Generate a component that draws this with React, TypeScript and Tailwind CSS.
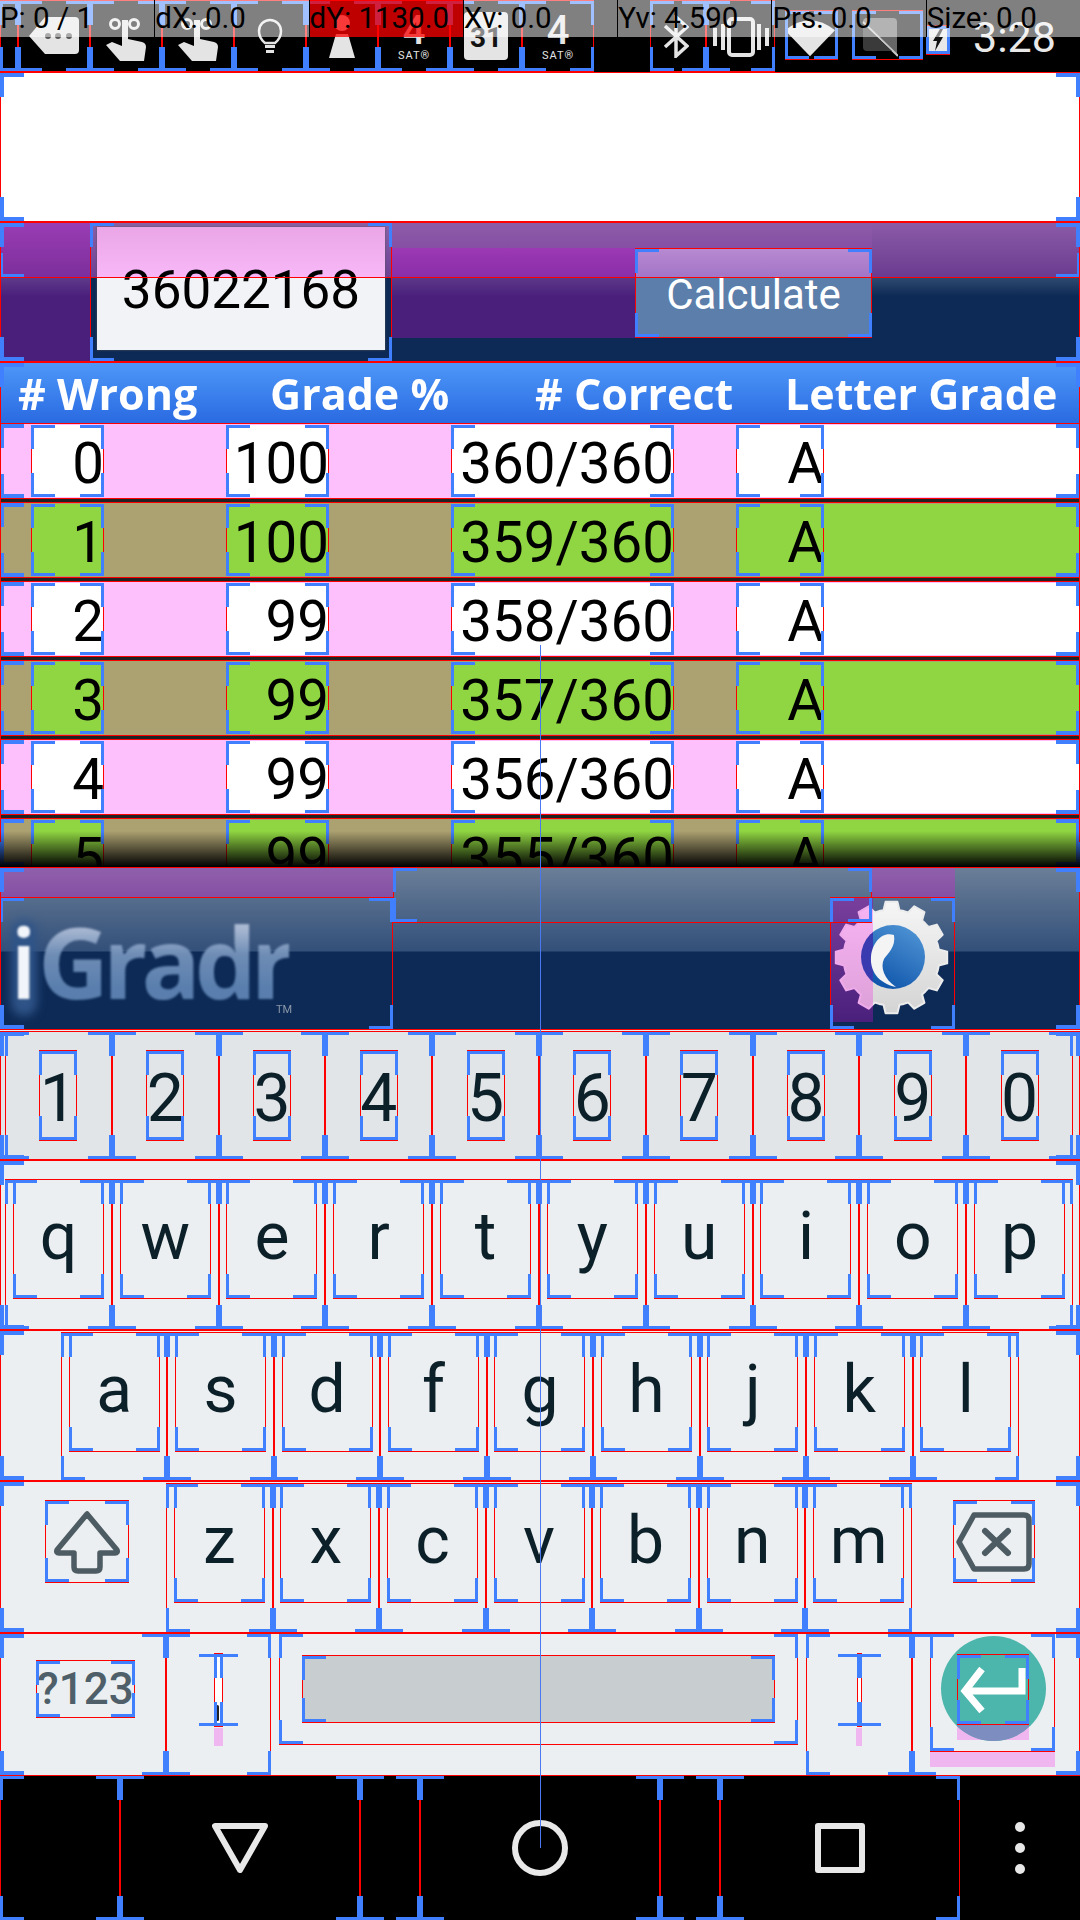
const rows = [
  ["0", "100", "360/360"],
  ["1", "100", "359/360"],
  ["2", "99", "358/360"],
  ["3", "99", "357/360"],
  ["4", "99", "356/360"],
  ["5", "99", "355/360"],
];
const debug = ["P: 0 / 1", "dX: 0.0", "dY: 1130.0", "Xv: 0.0", "Yv: 4.590", "Prs: 0.0", "Size: 0.0"];

// gear outline with short wide teeth
function gearPath(cx: number, cy: number, outer: number, inner: number, teeth: number) {
  const pts: string[] = [];
  for (let i = 0; i < teeth; i++) {
    const a = (i / teeth) * Math.PI * 2;
    const s = (Math.PI * 2) / teeth;
    [[inner, -0.5], [inner, -0.32], [outer, -0.2], [outer, 0.2], [inner, 0.32]].forEach(([r, o]) => {
      const t = a + o * s;
      pts.push(`${(cx + r * Math.cos(t)).toFixed(1)} ${(cy + r * Math.sin(t)).toFixed(1)}`);
    });
  }
  return "M" + pts.join("L") + "Z";
}

// layout bounds overlay: thin red box, blue corners
function Bounds({ thick, noY }: { thick?: boolean; noY?: boolean }) {
  const h = thick ? "absolute w-6 h-[4px] bg-[#4080ff]" : "absolute w-6 h-[3px] bg-[#4080ff]";
  const v = thick ? "absolute h-6 w-[4px] bg-[#4080ff]" : "absolute h-6 w-[3px] bg-[#4080ff]";
  return (
    <div className={noY ? "absolute inset-0 z-10 pointer-events-none border-x border-[#ff0000]" : "absolute inset-0 z-10 pointer-events-none border border-[#ff0000]"}>
      <span className={`${h} top-0 -left-px`} />
      <span className={`${v} top-0 -left-px`} />
      <span className={`${h} top-0 -right-px`} />
      <span className={`${v} top-0 -right-px`} />
      <span className={`${h} bottom-0 -left-px`} />
      <span className={`${v} bottom-0 -left-px`} />
      <span className={`${h} bottom-0 -right-px`} />
      <span className={`${v} bottom-0 -right-px`} />
    </div>
  );
}

function Slot({ w, children }: { w: string; children?: React.ReactNode }) {
  return (
    <div className={`relative h-full flex items-center justify-center ${w}`}>
      {children}
      <Bounds />
    </div>
  );
}

function Hand() {
  return (
    <svg width="40" height="43" viewBox="0 0 40 43" className="mt-[6px]">
      <circle cx="9" cy="6" r="4.5" fill="none" stroke="#e4e4e4" strokeWidth="3" />
      <circle cx="28" cy="6" r="4.5" fill="none" stroke="#e4e4e4" strokeWidth="3" />
      <path d="M16 2h6v19l14 3q4 1 4 5l-2 14H14L0 27l6-3 10 4Z" fill="#e4e4e4" />
    </svg>
  );
}

function Sat() {
  return (
    <div className="flex flex-col items-center text-[#e4e4e4] mt-[2px]">
      <span className="text-[40px] leading-[36px] font-medium">4</span>
      <span className="text-[11px] leading-[12px] tracking-[1px] mt-[1px]">SAT®</span>
    </div>
  );
}

function StatusBar() {
  return (
    <div className="relative h-[72px] bg-black flex shrink-0">
      <Slot w="w-[18px]" />
      <Slot w="w-[72px]">
        <svg width="50" height="37" viewBox="0 0 50 37" className="mt-[-1px]">
          <path d="M16 0H46a4 4 0 0 1 4 4V33a4 4 0 0 1-4 4H16L0 19Z" fill="#e4e4e4" />
          <circle cx="19" cy="19" r="3" fill="#555" />
          <circle cx="29" cy="19" r="3" fill="#555" />
          <circle cx="40" cy="19" r="3" fill="#555" />
        </svg>
      </Slot>
      <Slot w="w-[72px]"><Hand /></Slot>
      <Slot w="w-[72px]"><Hand /></Slot>
      <Slot w="w-[72px]">
        <svg width="26" height="37" viewBox="0 0 26 37" className="mt-[-1px]">
          <path d="M8 26C3 22 2 18 2 14a11 11 0 0 1 22 0c0 4-1 8-6 12Z" fill="none" stroke="#e4e4e4" strokeWidth="2.5" />
          <path d="M8 28h10v3H8Zm1 5h8v3H9Z" fill="#e4e4e4" />
        </svg>
      </Slot>
      <Slot w="w-[72px]">
        <svg width="26" height="44" viewBox="0 0 26 44">
          <circle cx="13" cy="9" r="8" fill="#e4e4e4" />
          <path d="M7 20h12l7 24H0Z" fill="#e4e4e4" />
        </svg>
      </Slot>
      <Slot w="w-[72px]"><Sat /></Slot>
      <Slot w="w-[72px]">
        <div className="relative w-[44px] h-[48px] mt-[-1px] rounded-[4px] bg-[#e4e4e4] flex items-center justify-center text-[28px] font-bold text-[#111] pt-[4px]">
          31
        </div>
      </Slot>
      <Slot w="w-[72px]"><Sat /></Slot>
      <div className="w-[56px]" />
      <Slot w="w-[56px]">
        <svg width="26" height="43" viewBox="0 0 26 43" className="ml-[-4px]">
          <path d="M2 11 24 31 13 41V2L24 12 2 32" fill="none" stroke="#e4e4e4" strokeWidth="3.5" />
        </svg>
      </Slot>
      <Slot w="w-[69px]">
        <svg width="56" height="40" viewBox="0 0 56 40" className="mt-[2px]">
          <rect x="16" y="2" width="24" height="36" rx="3" fill="none" stroke="#e4e4e4" strokeWidth="4" />
          <path d="M0 11h4v18H0Zm8-4h4v26H8Zm36 0h4v26h-4Zm8 4h4v18h-4Z" fill="#e4e4e4" />
        </svg>
      </Slot>
      <div className="w-[10px]" />
      <div className="relative w-[53px] h-[50px] mt-[10px]">
        <svg width="50" height="40" viewBox="0 0 52 40" className="absolute top-[7px] left-0">
          <path d="M0 13Q26-8 52 13L26 40Z" fill="#e4e4e4" />
        </svg>
        <Bounds />
      </div>
      <div className="w-[14px]" />
      <div className="relative w-[71px] h-[50px] mt-[10px]">
        <svg width="36" height="40" viewBox="0 0 36 40" className="absolute top-[7px] left-[10px]">
          <path d="M5 1H31a4 4 0 0 1 4 4V39L1 5a4 4 0 0 1 4-4Z" fill="#666" />
          <path d="M1 5 36 39" stroke="#c8c8c8" strokeWidth="2" />
          <path d="M1 7V30a4 4 0 0 0 4 4H30Z" fill="#3a3a3a" />
        </svg>
        <Bounds />
      </div>
      <div className="w-[3px]" />
      <div className="relative w-[24px] h-[30px] mt-[25px] bg-[#e8e8e8] flex items-center justify-center">
        <svg width="14" height="24" viewBox="0 0 14 24">
          <path d="M9 1 2 13h4l-2 10 8-14H8l4-8Z" fill="#111" />
        </svg>
        <Bounds />
      </div>
      <div className="flex-1 relative text-[43px] leading-none text-[#e8e8e8] pl-[23px] pt-[16px]">3:28</div>

      <div className="absolute top-0 inset-x-0 h-[37px] grid grid-cols-7 z-20">
        {debug.map((d, i) => (
          <div
            key={d}
            className={
              i === 2
                ? "bg-[rgba(255,0,0,0.75)] border-l border-black text-[29.5px] leading-[37px] text-black whitespace-nowrap"
                : i === 0
                ? "bg-white/50 text-[29.5px] leading-[37px] text-black whitespace-nowrap"
                : "bg-white/50 border-l border-black text-[29.5px] leading-[37px] text-black whitespace-nowrap"
            }
          >
            {d}
          </div>
        ))}
      </div>
    </div>
  );
}

function Toolbar() {
  return (
    <div className="relative h-[140px] shrink-0 flex bg-[#0d2a56]">
      {/* left */}
      <div className="w-[90px] flex flex-col">
        <div className="h-[56px] bg-linear-to-b from-[#9a3db4] to-[#7c2e9c]" />
        <div className="h-[18px] bg-linear-to-b from-[#5f3a8a] to-[#4a1f7c]" />
        <div className="flex-1 bg-[#4a1f7c]" />
      </div>
      {/* input */}
      <div className="relative w-[302px] flex flex-col">
        <div className="h-[56px] bg-linear-to-b from-[#8a62a8] to-[#6e3f94]" />
        <div className="flex-1 bg-[#0d2a56]" />
        <div className="absolute left-[7px] top-[5px] w-[288px] h-[123px] flex flex-col shadow-[0_0_2px_#555]">
          <div className="h-[51px] bg-linear-to-b from-[#eaa6e6] to-[#f8b8f8]" />
          <div className="flex-1 bg-[#f2f3f6]" />
          <div className="absolute inset-0 flex items-center justify-center text-[53px] text-black pt-[5px]">36022168</div>
        </div>
        <Bounds />
      </div>
      {/* middle */}
      <div className="w-[243px] flex flex-col">
        <div className="h-[26px] bg-linear-to-b from-[#8c5ca8] to-[#8650a4]" />
        <div className="h-[30px] bg-linear-to-b from-[#9c38b4] to-[#8a2ea8]" />
        <div className="h-[18px] bg-linear-to-b from-[#5c3888] to-[#4a1f7c]" />
        <div className="h-[42px] bg-[#4a1f7c]" />
        <div className="flex-1 bg-[#0d2a56]" />
      </div>
      {/* button */}
      <div className="w-[237px] flex flex-col">
        <div className="h-[26px] bg-linear-to-b from-[#8c5ca8] to-[#8650a4]" />
        <div className="relative h-[90px]">
          <div className="absolute inset-0 rounded-[5px] overflow-hidden flex flex-col">
            <div className="h-[30px] bg-linear-to-b from-[#b88ad2] to-[#a274c6]" />
            <div className="flex-1 bg-[#5b7eaa]" />
          </div>
          <div className="absolute inset-0 flex items-center justify-center text-[42px] text-white pt-[3px]">Calculate</div>
          <Bounds />
        </div>
        <div className="flex-1" />
      </div>
      {/* right */}
      <div className="flex-1 flex flex-col">
        <div className="h-[56px] bg-linear-to-b from-[#8c5ca8] to-[#6a3a90]" />
        <div className="h-[18px] bg-linear-to-b from-[#2f4a70] to-[#0d2a56]" />
      </div>
      <div className="absolute top-0 inset-x-0 h-[56px]"><Bounds /></div>
      <Bounds thick />
    </div>
  );
}

function Cell({ w, text }: { w: string; text: string }) {
  return (
    <div className={`relative shrink-0 h-full flex items-center justify-end text-[56.5px] text-black whitespace-nowrap pt-[7px] ${w}`}>
      {text}
      <Bounds noY />
    </div>
  );
}

function Table() {
  return (
    <div className="relative h-[505px] shrink-0 overflow-hidden">
      <div className="h-[61px] bg-linear-to-b from-[#4f98f8] to-[#2a6ae2] relative text-white font-bold text-[43px] leading-[64px] font-['Open_Sans'] blur-[0.5px] whitespace-nowrap">
        <span className="absolute left-[18px]"># Wrong</span>
        <span className="absolute left-[270px]">Grade %</span>
        <span className="absolute left-[535px]"># Correct</span>
        <span className="absolute left-[785px]">Letter Grade</span>
      </div>
      {rows.map((r, i) => (
        <div key={r[0]} className="h-[79px] flex flex-col">
          <div className={i % 2 ? "relative h-[76px] flex bg-[#aca171] py-[2px]" : "relative h-[76px] flex bg-[#fdc0fd] py-[2px]"}>
            <div className="w-[31px] shrink-0" />
            <Cell w={i % 2 ? "w-[73px] bg-[#90d642]" : "w-[73px] bg-white"} text={r[0]} />
            <div className="w-[122px] shrink-0" />
            <Cell w={i % 2 ? "w-[103px] bg-[#90d642]" : "w-[103px] bg-white"} text={r[1]} />
            <div className="w-[122px] shrink-0" />
            <Cell w={i % 2 ? "w-[223px] bg-[#90d642]" : "w-[223px] bg-white"} text={r[2]} />
            <div className="w-[62px] shrink-0" />
            <Cell w={i % 2 ? "w-[88px] bg-[#90d642]" : "w-[88px] bg-white"} text="A" />
            <div className={i % 2 ? "flex-1 bg-[#90d642]" : "flex-1 bg-white"} />
            <Bounds thick />
          </div>
          <div className="h-[3px] bg-[#222]" />
        </div>
      ))}
      <div className="absolute bottom-0 inset-x-0 h-[36px] z-20 bg-linear-to-b from-transparent to-black" />
      <Bounds thick />
    </div>
  );
}

function Gear() {
  const d = gearPath(61.5, 60.5, 56, 48, 12);
  return (
    <svg width="125" height="125" viewBox="0 0 125 125" className="block blur-[0.7px]">
      <defs>
        <clipPath id="gl"><rect x="0" y="0" width="43" height="125" /></clipPath>
        <clipPath id="gr"><rect x="43" y="0" width="82" height="125" /></clipPath>
        <linearGradient id="gw" x1="0" y1="0" x2="0" y2="1">
          <stop offset="0" stopColor="#f6f6f6" />
          <stop offset="1" stopColor="#d4d4d4" />
        </linearGradient>
        <linearGradient id="gb" x1="0.8" y1="0" x2="0.2" y2="1">
          <stop offset="0" stopColor="#4f94d4" />
          <stop offset="1" stopColor="#0a50a8" />
        </linearGradient>
        <linearGradient id="gp" x1="0" y1="0" x2="0" y2="1">
          <stop offset="0" stopColor="#f8b4f4" />
          <stop offset="1" stopColor="#dda0d8" />
        </linearGradient>
      </defs>
      <g clipPath="url(#gr)">
        <path d={d} fill="url(#gw)" stroke="#ececec" strokeWidth="2" strokeLinejoin="round" />
        <circle cx="63" cy="60" r="32" fill="url(#gb)" />
      </g>
      <g clipPath="url(#gl)">
        <path d={d} fill="url(#gp)" stroke="#eeaaea" strokeWidth="2" strokeLinejoin="round" />
        <circle cx="63" cy="60" r="32" fill="#3a3ab0" />
      </g>
      <path d="M64 38C52 34 42 46 41 60 40 74 48 86 66 90 54 82 50 70 54 62 58 56 66 50 64 38Z" fill="#f4f4f4" />
    </svg>
  );
}

function Footer() {
  return (
    <div className="relative h-[163px] shrink-0 flex bg-[linear-gradient(#6b7f98_0px,#33507a_84px,#0d2a56_85px)]">
      <div className="w-[393px] flex flex-col">
        <div className="h-[30px] bg-linear-to-b from-[#9060ac] to-[#8650a4]" />
        <div className="relative flex-1">
          <span className="absolute left-[11px] top-[-1px] w-[26px] h-[96px] mt-[24px] rounded-full bg-[#2f5488] blur-[5px]" />
          <span className="absolute left-[10px] top-[-1px] text-[98px] leading-[130px] font-semibold font-['Open_Sans'] text-[#f2f5fa] blur-[1px]">i</span>
          <span className="absolute left-[38px] top-[-1px] text-[98px] leading-[130px] font-bold tracking-[-6px] font-['Open_Sans'] text-transparent bg-clip-text bg-[linear-gradient(#a8b8d2_25%,#6f8db5_45%,#5a7fae_70%)] blur-[1px]">
            Gradr
          </span>
          <span className="absolute left-[276px] top-[107px] text-[11px] leading-[12px] text-[#8b97a8] blur-[0.5px]">TM</span>
          <Bounds />
        </div>
      </div>
      <div className="w-[437px]" />
      <div className="w-[125px] flex flex-col">
        <div className="h-[30px] flex">
          <div className="w-[42px]" />
          <div className="flex-1 bg-linear-to-b from-[#9060ac] to-[#8650a4]" />
        </div>
        <div className="relative flex-1">
          <div className="absolute left-0 top-0 w-[43px] h-[125px] bg-linear-to-b from-[#7a3f9c] to-[#4a1f7c]" />
          <div className="absolute left-0 top-0"><Gear /></div>
          <Bounds />
        </div>
      </div>
      <div className="absolute left-[393px] top-0 w-[479px] h-[56px]"><Bounds /></div>
      <Bounds thick />
    </div>
  );
}

function Key({ label }: { label: string }) {
  return (
    <div className="relative flex-1 flex items-start justify-center">
      <div className="relative w-[91px] h-[120px] flex items-center justify-center text-[66px] text-[#0b2028] pb-[5px]">
        {label}
        <Bounds />
      </div>
      <Bounds />
    </div>
  );
}

function Keyboard() {
  return (
    <div className="h-[746px] shrink-0 bg-[#eceff1] flex flex-col pt-px">
      <div className="relative h-[129px] bg-[#e2e5e8] flex pl-[5px] pr-[7px]">
        {["1", "2", "3", "4", "5", "6", "7", "8", "9", "0"].map((n) => (
          <div key={n} className="relative flex-1 flex items-center justify-center">
            <div className="relative w-[38px] h-[91px] flex items-center justify-center text-[66px] text-[#0b2028] pt-[6px]">
              {n}
              <Bounds />
            </div>
            <Bounds />
          </div>
        ))}
        <Bounds thick />
      </div>
      <div className="relative h-[170px] flex pl-[5px] pr-[7px] pt-[19px]">
        {["q", "w", "e", "r", "t", "y", "u", "i", "o", "p"].map((k) => <Key key={k} label={k} />)}
        <Bounds thick />
      </div>
      <div className="relative h-[151px] flex px-[61px] pt-[2px]">
        {["a", "s", "d", "f", "g", "h", "j", "k", "l"].map((k) => <Key key={k} label={k} />)}
        <Bounds thick />
      </div>
      <div className="relative h-[152px] flex px-[4px] pt-[2px]">
        <div className="relative w-[162px] shrink-0 flex items-start justify-center pt-[17px] pl-[3px]">
          <div className="relative w-[84px] h-[83px] flex items-center justify-center">
            <svg width="66" height="64" viewBox="0 0 66 64">
              <path d="M33 4 3 40q-1 3 2 3H20V57q0 4 4 4H42q4 0 4-4V43H61q3 0 2-3Z" fill="none" stroke="#4d5b63" strokeWidth="5.5" strokeLinejoin="round" />
            </svg>
            <Bounds />
          </div>
        </div>
        {["z", "x", "c", "v", "b", "n", "m"].map((k) => <Key key={k} label={k} />)}
        <div className="relative w-[164px] shrink-0 flex items-start justify-center pt-[17px]">
          <div className="relative w-[82px] h-[83px] flex items-center justify-center">
            <svg width="76" height="60" viewBox="0 0 76 60">
              <path d="M18 3H68q5 0 5 5V52q0 5-5 5H18L3 30Z" fill="none" stroke="#4d5b63" strokeWidth="5.5" strokeLinejoin="round" />
              <path d="M29 19 52 41M52 19 29 41" stroke="#4d5b63" strokeWidth="6" strokeLinecap="round" />
            </svg>
            <Bounds />
          </div>
        </div>
        <Bounds thick />
      </div>
      <div className="relative flex-1 flex">
        <div className="relative w-[166px] shrink-0 flex items-start justify-start pl-[36px] pt-[27px]">
          <div className="relative w-[99px] h-[58px] flex items-center justify-center text-[44px] font-medium text-[#4f5f69]">
            ?123
            <Bounds />
          </div>
          <Bounds />
        </div>
        <div className="relative w-[105px] shrink-0 flex justify-center pt-[20px]">
          <div className="relative w-[9px] h-[74px] bg-white">
            <div className="absolute left-[2px] top-[52px] w-[3px] h-[16px] rounded-full bg-[#222]" />
            <Bounds />
          </div>
          <div className="absolute left-[48px] top-[95px] w-[9px] h-[18px] bg-[#f0b6f0]" />
          <Bounds />
        </div>
        <div className="relative flex-1 px-[8px]">
          <div className="relative h-[112px] px-[23px] pt-[22px]">
            <div className="relative h-[68px] bg-[#c8cdd0]">
              <Bounds />
            </div>
            <Bounds />
          </div>
        </div>
        <div className="relative w-[106px] shrink-0 flex justify-center pt-[20px]">
          <div className="relative w-[5px] h-[74px] bg-white">
            <div className="absolute left-[1px] top-[52px] w-[2px] h-[8px] bg-[#222]" />
            <Bounds />
          </div>
          <div className="absolute left-[50px] top-[95px] w-[6px] h-[18px] bg-[#f0b6f0]" />
          <Bounds />
        </div>
        <div className="relative w-[168px] shrink-0">
          <div className="relative ml-[18px] w-[125px] h-[119px]">
            <div className="absolute left-[27px] top-[92px] w-[72px] h-[15px] bg-[#f0b6f0]" />
            <div className="absolute left-[11px] top-[3px] w-[105px] h-[105px] rounded-full overflow-hidden bg-[#4db6ac]">
              <div className="absolute left-[16px] top-[89px] w-[72px] h-[16px] bg-[#7e8dbf]" />
            </div>
            <div className="absolute left-[27px] top-[21px] w-[72px] h-[71px] flex items-center justify-center">
              <svg width="66" height="50" viewBox="0 0 66 50">
                <path d="M62 3V26H7M22 4 5 26 22 46" fill="none" stroke="#fff" strokeWidth="7" />
              </svg>
              <Bounds />
            </div>
            <Bounds />
          </div>
          <div className="ml-[18px] w-[125px] h-[15px] bg-[#f0b6f0]" />
          <Bounds />
        </div>
        <Bounds thick />
      </div>
    </div>
  );
}

function NavBox({ w, children }: { w: string; children?: React.ReactNode }) {
  return (
    <div className={`relative h-full flex items-center justify-center ${w}`}>
      {children}
      <Bounds noY />
    </div>
  );
}

function NavBar() {
  return (
    <div className="h-[144px] shrink-0 bg-black flex">
      <NavBox w="w-[120px]" />
      <NavBox w="w-[240px]">
        <svg width="56" height="50" viewBox="0 0 56 50">
          <path d="M3 3H53L28 47Z" fill="none" stroke="#e8e8e8" strokeWidth="6" strokeLinejoin="round" />
        </svg>
      </NavBox>
      <NavBox w="w-[60px]" />
      <NavBox w="w-[240px]">
        <div className="w-[56px] h-[56px] rounded-full border-[6px] border-[#e8e8e8]" />
      </NavBox>
      <NavBox w="w-[60px]" />
      <NavBox w="w-[240px]">
        <div className="w-[50px] h-[50px] rounded-[3px] border-[6px] border-[#e8e8e8]" />
      </NavBox>
      <div className="flex-1 flex flex-col items-center justify-center gap-[11px]">
        <div className="w-[10px] h-[10px] rounded-full bg-[#e8e8e8]" />
        <div className="w-[10px] h-[10px] rounded-full bg-[#e8e8e8]" />
        <div className="w-[10px] h-[10px] rounded-full bg-[#e8e8e8]" />
      </div>
    </div>
  );
}

export default function App() {
  return (
    <div className="relative w-[1080px] h-[1920px] overflow-hidden flex flex-col font-['Roboto',sans-serif]">
      <StatusBar />
      <div className="relative h-[150px] shrink-0 bg-white">
        <Bounds thick />
      </div>
      <Toolbar />
      <Table />
      <Footer />
      <Keyboard />
      <NavBar />
      {/* pointer trail */}
      <div className="absolute left-[540px] top-[645px] h-[1203px] w-px z-30 bg-[#4a78f0]" />
    </div>
  );
}
